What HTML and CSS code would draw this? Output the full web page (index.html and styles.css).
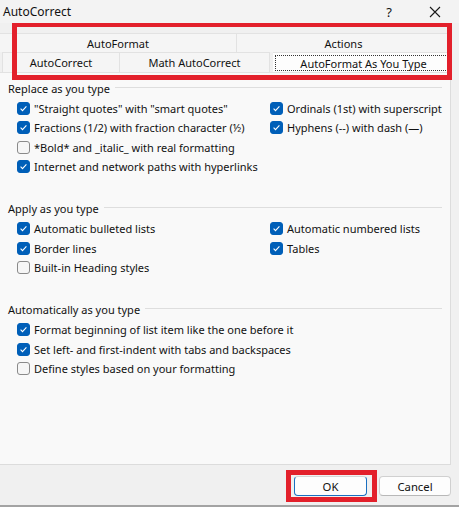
FILE: index.html
```html
<!DOCTYPE html>
<html>
<head>
<meta name="viewport" content="width=device-width, initial-scale=1">
<link rel="stylesheet" href="styles.css">
</head>
<body>

<div class="window">
  <div class="titlebar">
    <span class="title">AutoCorrect</span>
    <span class="help">?</span>
    <span class="close">
      <svg width="12" height="12" viewBox="0 0 12 12"><path d="M1 1L11 11M11 1L1 11" stroke="#1a1a1a" stroke-width="1.1" fill="none"/></svg>
    </span>
  </div>

  <div class="tabs">
    <div class="tab-row">
      <div class="tab t-autoformat">AutoFormat</div>
      <div class="tab t-actions">Actions</div>
    </div>
    <div class="tab-row">
      <div class="tab t-autocorrect">AutoCorrect</div>
      <div class="tab t-math">Math AutoCorrect</div>
      <div class="tab t-asyoutype selected"><span class="focus">AutoFormat As You Type</span></div>
    </div>
  </div>

  <div class="panel">
    <div class="group">
      <div class="group-head"><span>Replace as you type</span></div>
      <div class="options two-col">
        <label class="opt"><span class="box on"></span>"Straight quotes" with "smart quotes"</label>
        <label class="opt"><span class="box on"></span>Ordinals (1st) with superscript</label>
        <label class="opt"><span class="box on"></span>Fractions (1/2) with fraction character (½)</label>
        <label class="opt"><span class="box on"></span>Hyphens (--) with dash (—)</label>
        <label class="opt wide"><span class="box"></span>*Bold* and _italic_ with real formatting</label>
        <label class="opt wide"><span class="box on"></span>Internet and network paths with hyperlinks</label>
      </div>
    </div>

    <div class="group">
      <div class="group-head"><span>Apply as you type</span></div>
      <div class="options two-col">
        <label class="opt"><span class="box on"></span>Automatic bulleted lists</label>
        <label class="opt"><span class="box on"></span>Automatic numbered lists</label>
        <label class="opt"><span class="box on"></span>Border lines</label>
        <label class="opt"><span class="box on"></span>Tables</label>
        <label class="opt wide"><span class="box"></span>Built-in Heading styles</label>
      </div>
    </div>

    <div class="group">
      <div class="group-head"><span>Automatically as you type</span></div>
      <div class="options">
        <label class="opt"><span class="box on"></span>Format beginning of list item like the one before it</label>
        <label class="opt"><span class="box on"></span>Set left- and first-indent with tabs and backspaces</label>
        <label class="opt"><span class="box"></span>Define styles based on your formatting</label>
      </div>
    </div>
  </div>

  <div class="footer">
    <button class="btn btn-ok">OK</button>
    <button class="btn">Cancel</button>
  </div>

  <!-- red annotation boxes drawn over the dialog -->
  <div class="mark mark-tabs"></div>
  <div class="mark mark-ok"></div>
</div>

</body>
</html>
```

FILE: styles.css
```css
* {
  box-sizing: border-box;
}

body {
  margin: 0;
  font-family: "Noto Sans", "Open Sans", sans-serif;
  font-size: 11px;
  color: #111;
  background-color: #f0f0f0;
}

.window {
  position: relative;
  width: 459px;
  height: 507px;
  display: flex;
  flex-direction: column;
  background-color: #f0f0f0;
  border-bottom: 2px solid #a3a3a3;
  overflow: hidden;
}

/* Title bar */
.titlebar {
  height: 23px;
  display: flex;
  align-items: center;
  padding-left: 3px;
  background-color: #f3f3f3;
  font-size: 12px;
}

.title {
  flex: 1;
}

.help {
  width: 14px;
  margin-right: 33px;
  text-align: center;
  font-size: 13px;
}

.close {
  width: 12px;
  margin-right: 18px;
  display: flex;
}

/* Tab strip */
.tabs {
  width: 451px;
  padding-top: 10px;
  background-color: #f0f0f0;
}

.tab-row {
  display: flex;
}

.tab {
  height: 19px;
  display: flex;
  align-items: center;
  justify-content: center;
  background-color: #f5f5f5;
  border-top: 1px solid #e2e2e2;
  border-right: 1px solid #e2e2e2;
  white-space: nowrap;
}

.tab-row + .tab-row .tab {
  height: 20px;
}

.t-autoformat {
  width: 237px;
}

.t-actions {
  width: 214px;
}

.t-autocorrect {
  width: 118px;
  margin-left: 2px;
  border-left: 1px solid #e2e2e2;
}

.t-math {
  width: 150px;
}

.t-asyoutype {
  flex: 1;
  margin-left: 3px;
}

.tab.selected {
  background-color: #fdfdfd;
  padding: 2px 2px 1px 2px;
}

.focus {
  flex: 1;
  align-self: stretch;
  display: flex;
  align-items: center;
  justify-content: center;
  border: 1px dotted #333;
  margin-right: -4px;
}

/* Main panel */
.panel {
  width: 451px;
  height: 393px;
  background-color: #f9f9f9;
  border-top: 1px solid #e2e2e2;
  border-right: 1px solid #dcdcdc;
  border-bottom: 1px solid #dcdcdc;
  padding: 7px 0 0 8px;
}

.group {
  margin-bottom: 24px;
}

.group-head {
  height: 16px;
  display: flex;
  align-items: center;
  margin-right: 8px;
}

.group-head::after {
  content: "";
  flex: 1;
  height: 1px;
  margin: -2px 0 0 5px;
  background-color: #dedede;
}

.options {
  padding: 3px 0 0 9px;
}

.two-col {
  display: grid;
  grid-template-columns: 253px 1fr;
}

.opt {
  height: 19.3px;
  display: flex;
  align-items: center;
  white-space: nowrap;
}

.wide {
  grid-column: 1 / -1;
}

/* Checkboxes */
.box {
  width: 13px;
  height: 13px;
  margin-right: 4px;
  border: 1px solid #8a8a8a;
  border-radius: 3px;
  background-color: #f6f6f6;
  flex-shrink: 0;
}

.box.on {
  border-color: #005fb8;
  background-color: #005fb8;
  background-image: url("data:image/svg+xml,%3Csvg xmlns='http://www.w3.org/2000/svg' width='11' height='11' viewBox='0 0 11 11'%3E%3Cpath d='M2.6 5.7 4.5 7.6 8.4 3.4' stroke='white' stroke-width='1.1' fill='none'/%3E%3C/svg%3E");
  background-repeat: no-repeat;
  background-position: center;
}

/* Footer buttons */
.footer {
  flex: 1;
  display: flex;
  justify-content: flex-end;
  align-items: flex-start;
  gap: 12px;
  padding: 11px 8px 0 0;
}

.btn {
  width: 72px;
  height: 20px;
  font-family: inherit;
  font-size: 11.3px;
  color: #111;
  background-color: #fdfdfd;
  border: 1px solid #d0d0d0;
  border-bottom-color: #b8b8b8;
  border-radius: 4px;
  padding: 0;
}

.btn-ok {
  width: 73px;
  border: 1px solid #1a6fc0;
  border-top-color: #d5d5d5;
}

/* Red annotation frames */
.mark {
  position: absolute;
  border: 5px solid #e3202b;
}

.mark-tabs {
  left: 12px;
  top: 23px;
  width: 440px;
  height: 57px;
  border-top-width: 4px;
}

.mark-ok {
  left: 286px;
  top: 470px;
  width: 91px;
  height: 32px;
}
```
